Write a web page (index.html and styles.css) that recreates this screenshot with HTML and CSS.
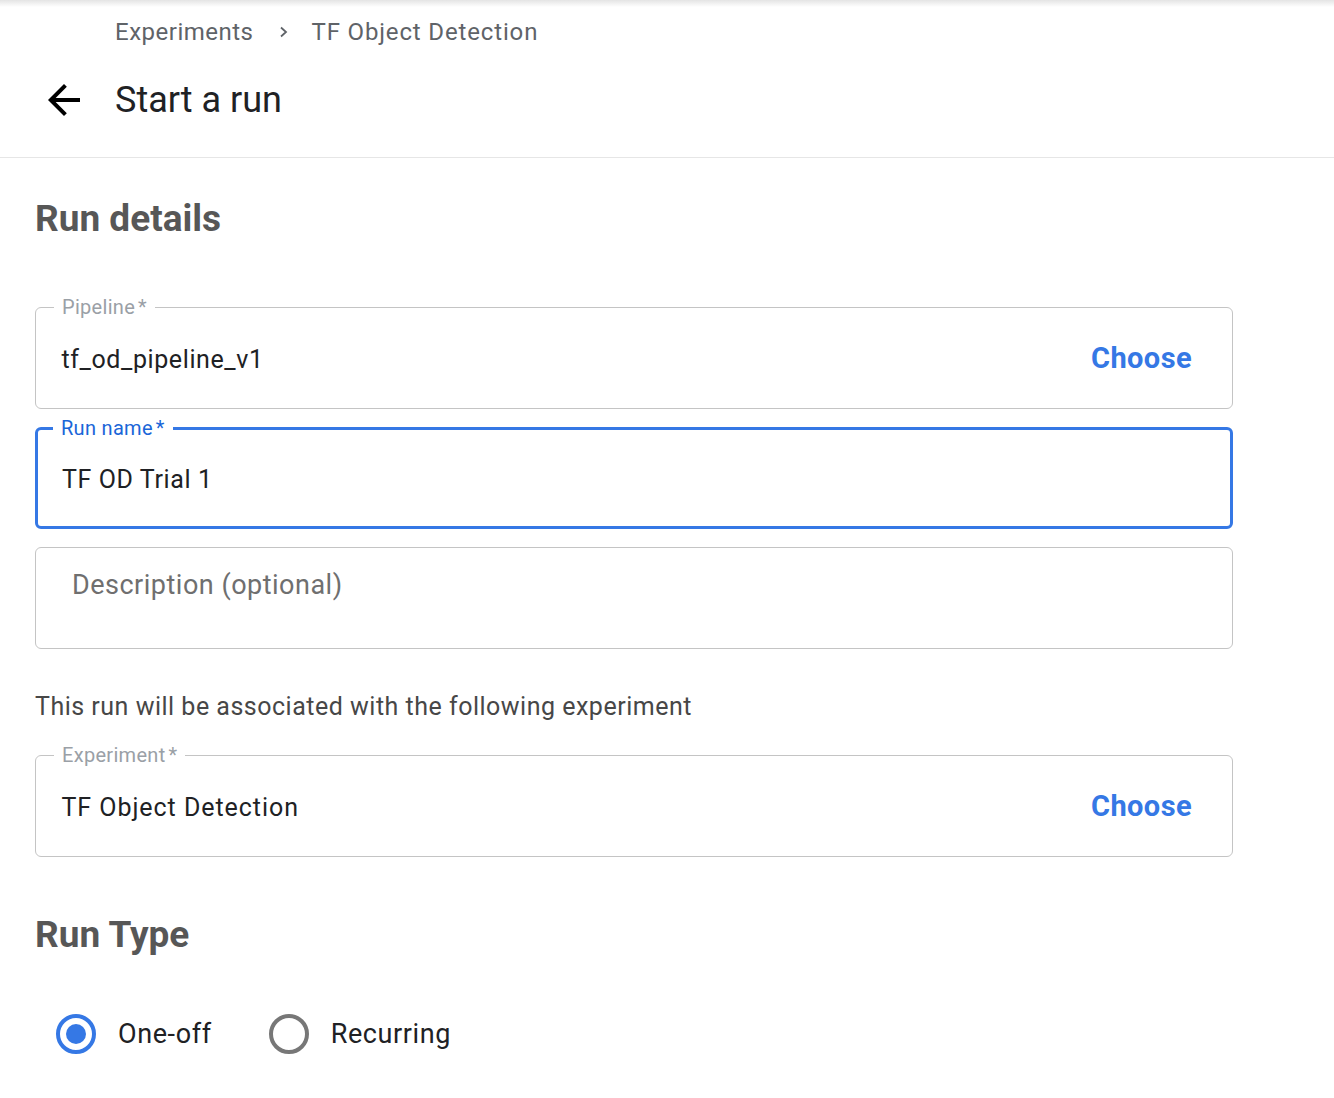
FILE: index.html
```html
<!DOCTYPE html>
<html lang="en">
<head>
<meta charset="utf-8">
<title>Start a run</title>
<link rel="stylesheet" href="styles.css">
</head>
<body>
<header class="header">
  <nav class="breadcrumb">
    <span class="crumb">Experiments</span>
    <svg class="chevron" width="10" height="14" viewBox="0 0 10 14"><polyline points="2,2.5 7,7 2,11.5" fill="none" stroke="#5f6368" stroke-width="1.8"/></svg>
    <span class="crumb crumb-current">TF Object Detection</span>
  </nav>
  <div class="title-row">
    <svg class="back" width="48" height="48" viewBox="0 0 24 24"><path d="M20 11H7.83l5.59-5.59L12 4l-8 8 8 8 1.41-1.41L7.83 13H20v-2z" fill="#000"/></svg>
    <h1 class="title">Start a run</h1>
  </div>
</header>
<main class="main">
  <h2 class="section-title">Run details</h2>
  <div class="field">
    <span class="field-label">Pipeline<span class="req">*</span></span>
    <span class="field-value">tf_od_pipeline_v1</span>
    <span class="choose">Choose</span>
  </div>
  <div class="field field-focused">
    <span class="field-label">Run name<span class="req">*</span></span>
    <span class="field-value">TF OD Trial 1</span>
  </div>
  <div class="field field-textarea">
    <span class="placeholder">Description (optional)</span>
  </div>
  <p class="note">This run will be associated with the following experiment</p>
  <div class="field">
    <span class="field-label">Experiment<span class="req">*</span></span>
    <span class="field-value field-value-wide">TF Object Detection</span>
    <span class="choose">Choose</span>
  </div>
  <h2 class="section-title run-type">Run Type</h2>
  <div class="radios">
    <label class="radio">
      <span class="radio-circle checked"><span class="radio-dot"></span></span>
      <span class="radio-label">One-off</span>
    </label>
    <label class="radio">
      <span class="radio-circle"></span>
      <span class="radio-label">Recurring</span>
    </label>
  </div>
</main>
</body>
</html>
```
FILE: styles.css
```css
* { box-sizing: border-box; }
html, body { margin: 0; padding: 0; background: #fff; }
body {
  font-family: Roboto, "Noto Sans", "Liberation Sans", sans-serif;
  color: #202124;
}
.header {
  background: linear-gradient(#e4e4e4, #ffffff 7px);
  padding: 18px 0 33px 0;
  border-bottom: 1px solid #e6e6e6;
}
.breadcrumb {
  display: flex;
  align-items: center;
  height: 28px;
  padding-left: 115px;
  font-size: 24px;
  letter-spacing: 0.5px;
  color: #5f6368;
}
.crumb-current { letter-spacing: 0.85px; }
.chevron { margin: 0 22px 0 26px; }
.title-row {
  display: flex;
  align-items: center;
  height: 48px;
  margin-top: 30px;
  padding-left: 40px;
}
.back { flex: none; }
.title {
  margin: 0 0 0 27px;
  font-size: 36px;
  font-weight: 400;
  color: #202124;
  line-height: 48px;
}
.main {
  padding: 0 35px;
  width: 1268px;
}
.section-title {
  margin: 39px 0 0 0;
  font-size: 37px;
  line-height: 44px;
  font-weight: 700;
  color: #575757;
}
.field {
  position: relative;
  height: 102px;
  border: 1.5px solid #c4c4c4;
  border-radius: 6px;
  display: flex;
  align-items: center;
  padding: 0 40px 0 25.5px;
  margin-top: 18px;
}
.section-title + .field { margin-top: 66px; }
.field-label {
  position: absolute;
  top: -12px;
  left: 18px;
  padding: 0 8px;
  background: #fff;
  font-size: 20px;
  line-height: 22px;
  letter-spacing: 0.3px;
  color: #9aa0a6;
}
.req { margin-left: 3px; }
.field-value {
  flex: 1;
  font-size: 25px;
  letter-spacing: 0.6px;
  color: #202124;
  margin-top: 3px;
}
.field-value-wide { letter-spacing: 0.95px; }
.choose {
  font-size: 29px;
  font-weight: 700;
  letter-spacing: 0.4px;
  color: #3578e5;
}
.field-focused {
  border: 3px solid #3578e5;
  padding-left: 24px;
}
.field-focused .field-label {
  color: #1a66d8;
  top: -13px;
  left: 15px;
}
.field-textarea {
  align-items: flex-start;
  padding: 21px 36px;
}
.placeholder {
  font-size: 27px;
  line-height: 32px;
  letter-spacing: 0.5px;
  color: #6f6f6f;
}
.note {
  margin: 43px 0 0 0;
  font-size: 25px;
  line-height: 30px;
  letter-spacing: 0.5px;
  color: #474747;
}
.note + .field { margin-top: 33px; }
.section-title.run-type { margin-top: 56px; }
.radios {
  display: flex;
  align-items: center;
  margin-top: 57px;
  padding-left: 21px;
  height: 40px;
}
.radio {
  display: flex;
  align-items: center;
  margin-right: 57px;
}
.radio-circle {
  width: 40px;
  height: 40px;
  border-radius: 50%;
  border: 4px solid #777;
  display: flex;
  align-items: center;
  justify-content: center;
}
.radio-circle.checked { border-color: #3578e5; }
.radio-dot {
  width: 20px;
  height: 20px;
  border-radius: 50%;
  background: #3578e5;
}
.radio-label {
  margin-left: 22px;
  font-size: 27px;
  letter-spacing: 0.6px;
  color: #202124;
}
```
